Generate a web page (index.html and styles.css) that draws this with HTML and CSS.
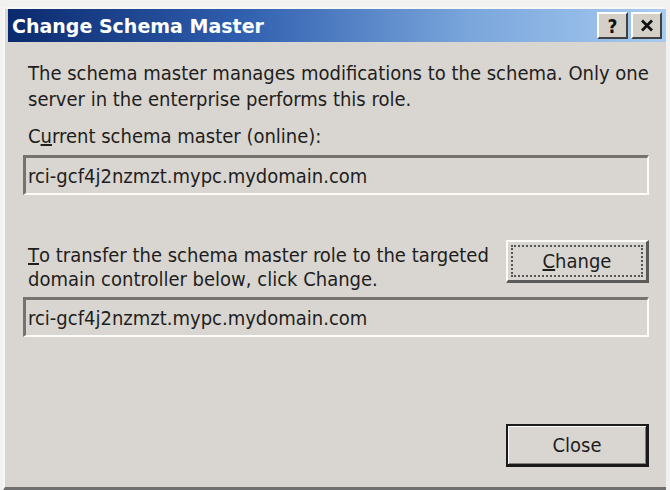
FILE: index.html
```html
<!DOCTYPE html>
<html>
<head>
<meta charset="utf-8">
<link rel="stylesheet" href="styles.css">
</head>
<body>
<div class="window">
  <div class="titlebar">
    <span class="title">Change Schema Master</span>
    <div class="tbtns">
      <span class="tbtn">?</span>
      <span class="tbtn x"><svg width="14" height="13" viewBox="0 0 14 13"><path d="M2 1.5 L12 11.5 M12 1.5 L2 11.5" stroke="#111" stroke-width="2.8" fill="none"/></svg></span>
    </div>
  </div>
  <div class="content">
    <p class="para">The schema master manages modifications to the schema. Only one server in the enterprise performs this role.</p>
    <p class="label">C<span class="ul">u</span>rrent schema master (online):</p>
    <div class="field">rci-gcf4j2nzmzt.mypc.mydomain.com</div>
    <div class="transfer">
      <p class="para2"><span class="ul">T</span>o transfer the schema master role to the targeted<br>domain controller below, click Change.</p>
      <div class="btn change"><span class="focus"><span class="ul">C</span>hange</span></div>
    </div>
    <div class="field">rci-gcf4j2nzmzt.mypc.mydomain.com</div>
    <div class="footer">
      <div class="btn close"><span>Close</span></div>
    </div>
  </div>
</div>
</body>
</html>
```

FILE: styles.css
```css
html, body {
  margin: 0;
  padding: 0;
}
body {
  width: 670px;
  height: 490px;
  overflow: hidden;
  background: #f2f2f0;
  font-family: "DejaVu Sans Condensed", "DejaVu Sans", sans-serif;
  font-stretch: condensed;
  color: #1e1e1e;
}
.ul {
  display: inline-block;
  text-decoration: underline;
}
.window {
  box-sizing: border-box;
  margin: 7px 4px 0 3px;
  height: 483px;
  background: #d9d5d0;
  border-left: 2px solid #f7f7f5;
  border-top: 2px solid #f7f7f5;
  border-bottom: 3px solid #707070;
  padding: 0 0 0 3px;
  display: flex;
  flex-direction: column;
}
.titlebar {
  height: 33px;
  background: linear-gradient(to right, #0b2a6e 0%, #2f5eae 35%, #7aa6dc 70%, #a8cbf0 100%);
  display: flex;
  align-items: center;
  justify-content: space-between;
  padding: 0 4px 0 4px;
}
.title {
  color: #fff;
  font-family: "DejaVu Sans", sans-serif;
  font-stretch: normal;
  font-weight: bold;
  font-size: 19px;
}
.tbtns {
  display: flex;
  gap: 3px;
}
.tbtn {
  box-sizing: border-box;
  width: 31px;
  height: 27px;
  background: #d4d0c8;
  border-top: 2px solid #fff;
  border-left: 2px solid #fff;
  border-right: 2px solid #404040;
  border-bottom: 2px solid #404040;
  display: flex;
  align-items: center;
  justify-content: center;
  font-family: "DejaVu Sans", sans-serif;
  font-weight: bold;
  font-size: 19px;
  color: #111;
}
.content {
  flex: 1;
  display: flex;
  flex-direction: column;
  padding: 0 17px 0 15px;
  font-size: 20px;
}
.para {
  margin: 18px 0 0 5px;
  line-height: 26px;
  width: 630px;
}
.label {
  margin: 11px 0 0 5px;
  line-height: 26px;
}
.field {
  box-sizing: border-box;
  height: 40px;
  margin-top: 6px;
  border-top: 3px solid #747370;
  border-left: 3px solid #747370;
  border-right: 2px solid #fbfbfa;
  border-bottom: 2px solid #fbfbfa;
  padding: 0 0 0 2px;
  display: flex;
  align-items: center;
}
.transfer {
  display: flex;
  justify-content: space-between;
  align-items: flex-start;
  margin-top: 45px;
}
.para2 {
  margin: 3px 0 0 5px;
  line-height: 24px;
  white-space: nowrap;
}
.btn {
  box-sizing: border-box;
  width: 143px;
  height: 43px;
  background: #d9d5d0;
  display: flex;
  align-items: center;
  justify-content: center;
}
.change {
  border-top: 2px solid #fbfbfa;
  border-left: 2px solid #fbfbfa;
  border-right: 3px solid #5a5a58;
  border-bottom: 3px solid #5a5a58;
  padding: 3px;
}
.change .focus {
  box-sizing: border-box;
  width: 100%;
  height: 100%;
  border: 2px dotted #555;
  display: flex;
  align-items: center;
  justify-content: center;
}
.footer {
  display: flex;
  justify-content: flex-end;
  margin-top: auto;
  margin-bottom: 20px;
}
.close {
  border: 2px solid #1a1a1a;
  border-right-width: 3px;
  border-bottom-width: 3px;
  box-shadow: inset 1px 1px 0 #fbfbfa, inset -1px -1px 0 #808080;
}
```
